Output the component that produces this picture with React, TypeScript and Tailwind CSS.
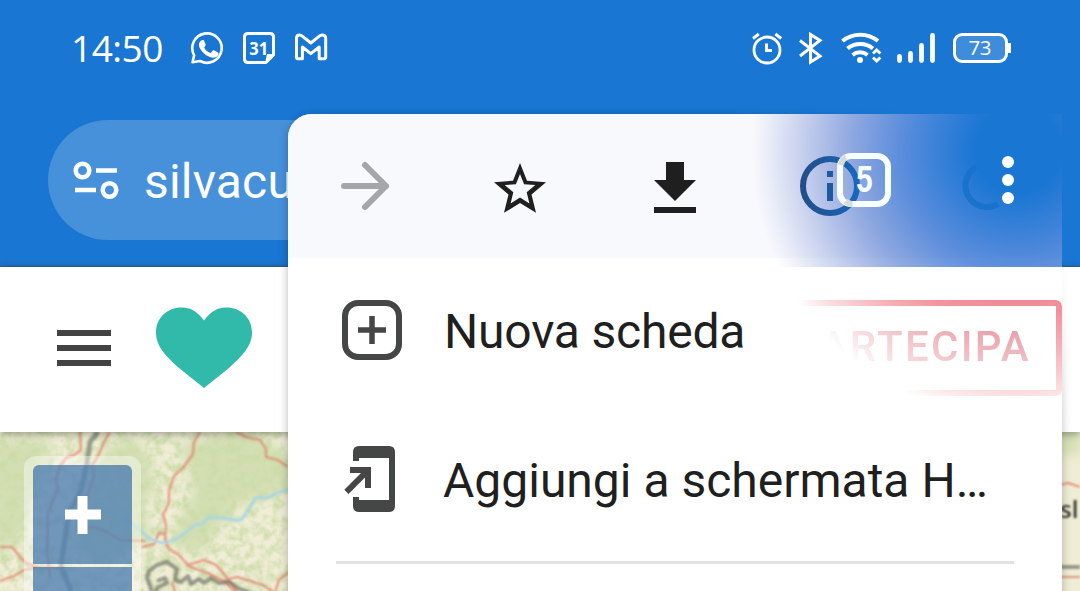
import React from 'react';

function StatusBar() {
  return (
    <div className="flex h-24 items-center pl-[71px] text-white">
      <span className="w-[119px] pb-0.5 font-['Open_Sans',sans-serif] text-[37px] leading-none tracking-[-0.5px]">14:50</span>
      <svg className="h-9 w-[146px] shrink-0" viewBox="190 30 146 36" fill="none" stroke="white">
        <path strokeWidth="2.600" strokeLinejoin="round" d="M192.500 62.300l1.700-7A14.700 14.700 0 1 1 200 61z" />
        <path fill="white" stroke="none" d="M200.600 41.100c1.700-1.500 3.200-1.200 3.800.3l1.200 3c.3.9-.2 1.700-1.500 3 1.500 2.800 3.800 4.600 6.500 5.700l2-2.300c.5-.6 1.100-.6 1.800-.2l3.600 1.800c1 .5.5 2.600-.5 3.700-2 2.100-5 2-8.200.7-4.300-1.700-7.900-5.300-9.700-9-1.100-2.500-.8-5.200 1-6.700z" />
        <path strokeWidth="3" strokeLinejoin="round" d="M248 33.500h22q3.500 0 3.500 3.500v18l-7.500 7.500H248q-3.500 0-3.500-3.500V37q0-3.500 3.500-3.500z" />
        <path fill="white" stroke="none" d="M267 54h7.500l-9.500 9.500z" />
        <text x="258.800" y="54.500" textAnchor="middle" fill="white" stroke="none" fontFamily="Open Sans, sans-serif" fontWeight="700" fontSize="18.500" textLength="19" lengthAdjust="spacingAndGlyphs">31</text>
        <path strokeWidth="3" strokeLinejoin="round" d="M296.500 38.300q0-3.300 3-3.300 1.400 0 2.800 1.200l8.500 6.800 8.500-6.800q1.400-1.200 2.800-1.200 3.600 0 3.600 3.300V57q0 1.700-1.700 1.700h-4.800V47l-8.400 6.600-8.400-6.600v11.700h-4.300q-1.600 0-1.600-1.700z" />
      </svg>
      <svg className="ml-[412px] h-10 w-[268px] shrink-0" viewBox="748 28 268 40" fill="none" stroke="white">
        <circle cx="767" cy="50" r="13" strokeWidth="2.800" />
        <path strokeWidth="3" d="M766.500 43.500v7h5.500M753 38.500l5.800-4.500M781.200 38.500l-5.800-4.500" />
        <path strokeWidth="3" strokeLinejoin="miter" d="M800 40.500l20 15.500-9.500 6V34.500l9.500 6-20 15.500" />
        <path strokeWidth="4" d="M842.500 41a28 28 0 0 1 35.500 0" />
        <path strokeWidth="4" d="M847.500 48.500a20 20 0 0 1 25.500 0" />
        <path strokeWidth="4" d="M852.500 55a12 12 0 0 1 15 0" />
        <circle cx="860" cy="60" r="3" fill="white" stroke="none" />
        <path strokeWidth="3" d="M873 53.500l3.700-3.500 3.700 3.500M873 57.500l3.700 3.500 3.700-3.500" />
        <path strokeWidth="4.800" strokeLinecap="round" d="M899.500 56.500v4M910.500 53.500v7M921.500 45.500v15M932.500 35.500v25" />
        <rect x="954.500" y="34.500" width="52" height="27" rx="7.500" strokeWidth="3" fill="#3f8dda" />
        <path strokeWidth="3" d="M1009.500 43v10" />
        <text x="980" y="55" textAnchor="middle" fill="white" stroke="none" fontFamily="Open Sans, sans-serif" fontWeight="400" fontSize="20.500" textLength="23">73</text>
      </svg>
    </div>
  );
}

function AddressBar() {
  return (
    <div className="flex h-[171px] items-start border-b-2 border-[#2868b0] pt-6 pl-12">
      <div className="flex h-[120px] w-[720px] items-center rounded-full bg-[#4791db] pl-6 text-white">
        <svg className="h-12 w-12" viewBox="72 156 48 48" fill="none" stroke="white" strokeWidth="4.500">
          <circle cx="82.500" cy="170.500" r="6.800" />
          <circle cx="109.500" cy="190" r="6.800" />
          <path d="M96 170.500h21M75 190h21" />
        </svg>
        <span className="ml-6 pt-[3px] text-[48px] leading-none tracking-[0.2px]">silvacu</span>
      </div>
    </div>
  );
}

function SiteHeader() {
  return (
    <div className="relative z-10 flex h-[165px] items-center bg-white pb-[3px] pl-[57px] shadow-[0_2px_8px_rgba(0,0,0,0.35)]">
      <div className="flex w-[54px] flex-col gap-[9px]">
        <div className="h-1.5 bg-[#434343]" />
        <div className="h-1.5 bg-[#434343]" />
        <div className="h-1.5 bg-[#434343]" />
      </div>
      <svg className="ml-[45px] h-[82px] w-24" viewBox="156 307 96 82">
        <path fill="#31b9aa" d="M204 320.500C211 311 218 307.500 226 307.500c15 0 26 10.500 26 25 0 15-12 25-23 35.500L204 388l-25-20c-12-11-23-21-23-35.500 0-14.500 11-25 26-25 8 0 15 3.500 22 13z" />
      </svg>
    </div>
  );
}

function MapView() {
  return (
    <div className="relative h-[159px] overflow-hidden bg-[#f0edd6]">
      <svg className="absolute inset-0 h-[159px] w-[1080px]" viewBox="0 432 1080 159" fill="none">
        <defs>
          <filter id="soft" x="-10%" y="-10%" width="120%" height="120%"><feGaussianBlur stdDeviation="6" /></filter>
          <filter id="line"><feGaussianBlur stdDeviation="0.8" /></filter>
          <filter id="grain" x="0" y="0" width="100%" height="100%" colorInterpolationFilters="sRGB">
            <feTurbulence type="fractalNoise" baseFrequency="0.110" numOctaves="3" seed="8" />
            <feColorMatrix values="0 0 0 0 0.80  0 0 0 0 0.86  0 0 0 0 0.66  2.200 0 0 0 -0.800" />
          </filter>
        </defs>
        <g filter="url(#soft)" fill="#d3dfb2">
          <path d="M-10 440H50l-5 35-18 40-5 30-32 5zM110 442h32l15 45-15 20 10 30-50 30-30-20 10-50zM178 445l70-15 50 30v30l-60 15-40 50-28-15 25-50zM1060 425h20v30h-20z" />
        </g>
        <rect y="432" width="300" height="159" filter="url(#grain)" />
        <g filter="url(#line)">
          <path stroke="#6f766d" strokeWidth="5" strokeOpacity="0.650" strokeLinejoin="round" d="M98 432l-8 10-3 22-6 26-12 24-5 30-3 22 10 25" />
          <path stroke="#e0866f" strokeWidth="2.200" strokeOpacity="0.850" d="M80 430l1 20-7 5-8 3-7 10-3 12 2 8-10 25-1 40 3 25M110 432l-6 10-4 10-8 14 2 10-8 23-3 14-5 18 15-4 12 4 15 9 25 1M0 547h12l8 10 6 6 14 5h20M0 581l14-5 10-6 12-2M200 432l-6 10-1 12-10 14-9 8-5 15v12l-6 12 3 10-1 15 4 9 10 6 9 10 16-5 12 5 9 10 15 20M142 547l12-3 5-11 6 1 2 12M188 566l22 8 15 8 10 10M236 432l10 5 14 3 6 9 0 8 12 3 10 7M225 580l12-3 26 8 10 7M275 592l4-12 10-8M172 582l3 10M1060 485l8-2 12 4M1060 577h20" />
          <path stroke="#a9d6e2" strokeWidth="2.800" strokeLinejoin="round" d="M123 517l12 9 15 13 12 4 12-3 10-6 12-10 5 1 8-8 14 1 12 2 6 0 8-10 6-12 12 0 12-6 12-3" />
          <path stroke="#686b61" strokeOpacity="0.650" strokeWidth="4" strokeLinejoin="round" d="M152 592l-5-15 2-6 8-6 10-3 10 7-2 11 6 2 7-6 3 8 8-5 5 4 7-5 8 5 10-1 9 6 10 4 10 6M157 581l8-3 2 5-10 5-2 5M1060 567h20" />
        </g>
        <text x="1060" y="518" fontFamily="Open Sans, sans-serif" fontSize="24" fontWeight="600" fill="#34362f" filter="url(#line)">sl</text>
      </svg>
      <div className="absolute top-6 left-6 flex h-40 w-[117px] flex-col gap-[3px] rounded-t-[12px] bg-white/40 p-[9px]">
        <button className="flex h-[99px] shrink-0 items-center justify-center rounded-t-[6px] bg-[#2b66a5]/65">
          <svg className="h-[38px] w-9" viewBox="0 0 36 38" fill="none" stroke="white" strokeWidth="10">
            <path d="M17.500 0v38M0 18.500h36" />
          </svg>
        </button>
        <div className="h-20 shrink-0 bg-[#2b66a5]/65" />
      </div>
    </div>
  );
}

function MenuToolbar() {
  return (
    <div className="relative flex h-36 rounded-tl-[24px] bg-[#f8f9fd]">
      <svg className="h-36 w-[774px]" viewBox="288 114 774 144" fill="none">
        <path stroke="#a5a6a9" strokeWidth="6" strokeLinecap="round" strokeLinejoin="round" d="M344 186h42M365 165l21 21-21 21" />
        <path fill="#1f1f1f" fillRule="evenodd" d="M520 163l7 17.700 19 1.500-14.500 12.300 4.500 18.300-16-9.700-16 9.700 4.500-18.300L494 182.200l19-1.500zM520 174l-4.100 10.200-11.200.9 8.600 7.200-2.700 11.200 9.400-5.900 9.400 5.900-2.700-11.200 8.600-7.200-11.200-.9z" />
        <path fill="#1f1f1f" d="M666 162h18v18h12l-21 21-21-21h12zM654 207h42v6h-42z" />
      </svg>
      <div className="absolute top-0 right-0 h-[153px] w-[330px] bg-[radial-gradient(circle_at_286px_36px,#1976d3_0px,#1976d3_42px,rgba(31,112,211,0.880)_80px,rgba(37,103,207,0.730)_120px,rgba(38,88,196,0.510)_165px,rgba(38,80,192,0.350)_195px,rgba(36,70,184,0.180)_227px,rgba(36,70,184,0.060)_252px,rgba(36,70,184,0)_267px)]" />
      <svg className="absolute top-[38px] right-[18px] h-[66px] w-[246px]" viewBox="798 152 246 66" fill="none">
        <defs>
          <linearGradient id="info" x1="800" y1="0" x2="860" y2="0" gradientUnits="userSpaceOnUse">
            <stop stopColor="#234d87" /><stop offset="1" stopColor="#1968bb" />
          </linearGradient>
        </defs>
        <circle cx="830" cy="186" r="27" stroke="url(#info)" strokeWidth="6" />
        <path fill="#1e59a2" d="M827 171h6v6h-6zM827 183h6v18h-6z" />
        <path stroke="#1972cc" strokeWidth="6" d="M976 167a21 21 0 1 0 22 37" />
        <rect x="840" y="156" width="48" height="48" rx="11" stroke="#f8ffff" strokeWidth="6" />
        <path stroke="#d5dcdc" strokeWidth="6" d="M841 165q1-6 5-7.500M845.500 201q3 3 7 3" />
        <circle cx="1008" cy="162" r="6" fill="white" />
        <circle cx="1008" cy="180" r="6" fill="white" />
        <circle cx="1008" cy="198" r="6" fill="white" />
        <text x="855.500" y="192" fontFamily="Roboto, sans-serif" fontSize="36" fontWeight="700" fill="#f8ffff" textLength="17.500" lengthAdjust="spacingAndGlyphs">5</text>
      </svg>
    </div>
  );
}

function ParticipateButton() {
  return (
    <div className="absolute top-[186px] right-0 flex h-24 w-[280px] items-center justify-end rounded-[6px] border-6 border-[#e52638] pr-[25px] pb-0.5 text-[42px] leading-none font-medium tracking-[2.3px] text-[#cf3044] [mask-image:radial-gradient(circle_at_236px_-150px,rgba(0,0,0,0.560)_140px,rgba(0,0,0,0.480)_175px,rgba(0,0,0,0.340)_205px,rgba(0,0,0,0.150)_244px,transparent_268px)]">
      PARTECIPA
    </div>
  );
}

function MenuShadow() {
  return (
    <div className="pointer-events-none absolute inset-0 z-20 [mask-image:radial-gradient(circle_at_1018px_150px,transparent_120px,black_290px)]">
      <div className="absolute top-[114px] left-[288px] h-[500px] w-[774px] rounded-t-[24px] shadow-[0_2px_10px_rgba(0,0,0,0.28)]" />
    </div>
  );
}

function BrowserMenu() {
  return (
    <div className="absolute top-[114px] left-[288px] z-20 h-[500px] w-[774px] rounded-tl-[24px] bg-white">
      <MenuToolbar />
      <ParticipateButton />
      <div className="flex h-[144px] items-center pl-[54px] text-[#1f1f1f]">
        <svg className="h-[60px] w-[60px]" viewBox="0 0 60 60" fill="none" stroke="#454746">
          <rect x="3" y="3" width="54" height="54" rx="13" strokeWidth="6" />
          <path strokeWidth="5.500" d="M16 30h28M30 16v28" />
        </svg>
        <span className="ml-[42px] pt-[3px] text-[48px] leading-none tracking-[-0.2px]">Nuova scheda</span>
      </div>
      <div className="flex h-[159px] items-center pb-1.5 pl-[54px] text-[#1f1f1f]">
        <svg className="h-[66px] w-[60px] shrink-0" viewBox="342 446 60 66">
          <path fill="#454746" fillRule="evenodd" d="M353 461v-9q0-6 6-6h30q6 0 6 6v54q0 6-6 6h-30q-6 0-6-6v-9h6v3h30v-42h-30v3z" />
          <path fill="#454746" d="M350 467h21v21h-6V477.500l-16.500 16.500-4.200-4.200L361 473h-11z" />
        </svg>
        <span className="ml-[41px] pt-1 text-[48px] leading-none whitespace-nowrap">Aggiungi a schermata H…</span>
      </div>
      <div className="mr-12 ml-12 h-[3px] bg-[#e1e3e1]" />
    </div>
  );
}

export default function App() {
  return (
    <div className="relative h-[591px] w-[1080px] overflow-hidden bg-[#1976d3] font-['Roboto',sans-serif]">
      <StatusBar />
      <AddressBar />
      <SiteHeader />
      <MapView />
      <MenuShadow />
      <BrowserMenu />
    </div>
  );
}
